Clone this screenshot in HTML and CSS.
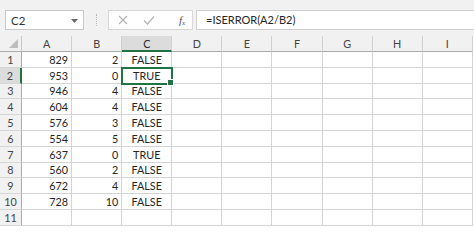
FILE: index.html
```html
<!DOCTYPE html>
<html>
<head>
<meta charset="utf-8">
<link rel="stylesheet" href="styles.css">
</head>
<body>
<div class="toolbar">
  <div class="namebox">
    <span class="name">C2</span>
    <svg class="drop" width="7" height="4" viewBox="0 0 7 4"><path d="M0 0 H7 L3.5 4 Z" fill="#6b6b6b"/></svg>
  </div>
  <div class="grip"></div>
  <div class="fxbtns">
    <svg class="ic" width="10" height="10" viewBox="0 0 10 10"><path d="M1 1 L9 9 M9 1 L1 9" stroke="#b4b4b4" stroke-width="1.2" fill="none"/></svg>
    <svg class="ic" width="12" height="10" viewBox="0 0 12 10"><path d="M1 5.5 L4.5 9 L11 1.5" stroke="#b4b4b4" stroke-width="1.2" fill="none"/></svg>
    <span class="fx">f<sub>x</sub></span>
  </div>
  <div class="formula">=ISERROR(A2/B2)</div>
</div>
<div class="sheet">
  <div class="corner"></div>
  <div class="ch">A</div><div class="ch">B</div><div class="ch selh">C</div><div class="ch">D</div><div class="ch">E</div><div class="ch">F</div><div class="ch">G</div><div class="ch">H</div><div class="ch">I</div>

  <div class="rh">1</div><div class="c n">829</div><div class="c n">2</div><div class="c b">FALSE</div><div class="c"></div><div class="c"></div><div class="c"></div><div class="c"></div><div class="c"></div><div class="c"></div>
  <div class="rh selr">2</div><div class="c n">953</div><div class="c n">0</div><div class="c b sel">TRUE</div><div class="c"></div><div class="c"></div><div class="c"></div><div class="c"></div><div class="c"></div><div class="c"></div>
  <div class="rh">3</div><div class="c n">946</div><div class="c n">4</div><div class="c b">FALSE</div><div class="c"></div><div class="c"></div><div class="c"></div><div class="c"></div><div class="c"></div><div class="c"></div>
  <div class="rh">4</div><div class="c n">604</div><div class="c n">4</div><div class="c b">FALSE</div><div class="c"></div><div class="c"></div><div class="c"></div><div class="c"></div><div class="c"></div><div class="c"></div>
  <div class="rh">5</div><div class="c n">576</div><div class="c n">3</div><div class="c b">FALSE</div><div class="c"></div><div class="c"></div><div class="c"></div><div class="c"></div><div class="c"></div><div class="c"></div>
  <div class="rh">6</div><div class="c n">554</div><div class="c n">5</div><div class="c b">FALSE</div><div class="c"></div><div class="c"></div><div class="c"></div><div class="c"></div><div class="c"></div><div class="c"></div>
  <div class="rh">7</div><div class="c n">637</div><div class="c n">0</div><div class="c b">TRUE</div><div class="c"></div><div class="c"></div><div class="c"></div><div class="c"></div><div class="c"></div><div class="c"></div>
  <div class="rh">8</div><div class="c n">560</div><div class="c n">2</div><div class="c b">FALSE</div><div class="c"></div><div class="c"></div><div class="c"></div><div class="c"></div><div class="c"></div><div class="c"></div>
  <div class="rh">9</div><div class="c n">672</div><div class="c n">4</div><div class="c b">FALSE</div><div class="c"></div><div class="c"></div><div class="c"></div><div class="c"></div><div class="c"></div><div class="c"></div>
  <div class="rh">10</div><div class="c n">728</div><div class="c n">10</div><div class="c b">FALSE</div><div class="c"></div><div class="c"></div><div class="c"></div><div class="c"></div><div class="c"></div><div class="c"></div>
  <div class="rh">11</div><div class="c"></div><div class="c"></div><div class="c"></div><div class="c"></div><div class="c"></div><div class="c"></div><div class="c"></div><div class="c"></div><div class="c"></div>
</div>
</body>
</html>
```

FILE: styles.css
```css
* { box-sizing: border-box; }
html, body {
  margin: 0;
  padding: 0;
  background: #ffffff;
  overflow: hidden;
  font-family: "Lato", "Noto Sans", sans-serif;
  color: #262626;
}
.toolbar {
  height: 36px;
  background: #f1f1f1;
  display: flex;
  align-items: flex-start;
  padding: 10px 0 0 5px;
}
.namebox {
  width: 79px;
  height: 20px;
  background: #fff;
  border: 1px solid #c8c8c8;
  display: flex;
  align-items: center;
  justify-content: space-between;
  padding: 0 5px 0 5px;
  font-size: 11.5px;
  color: #333;
}
.drop { margin-top: 1px; }
.grip {
  width: 1px;
  height: 12px;
  margin: 4px 11px 0 12px;
  border-left: 1px dotted #b8b8b8;
}
.fxbtns {
  width: 85px;
  height: 20px;
  background: #fff;
  border: 1px solid #d6d6d6;
  display: flex;
  align-items: center;
  padding-left: 9px;
  gap: 17px;
}
.fxbtns .ic:nth-child(2) { margin-left: -2px; }
.fx {
  font-family: "Liberation Serif", serif;
  font-style: italic;
  font-size: 11px;
  color: #555;
  margin-left: 7px;
}
.fx sub { font-size: 7px; vertical-align: -1px; }
.formula {
  flex: 1;
  margin-left: 3px;
  height: 20px;
  background: #fff;
  border: 1px solid #d0d0d0;
  border-right: none;
  font-size: 11px;
  line-height: 18px;
  padding-left: 9px;
  color: #262626;
}
.sheet {
  display: grid;
  grid-template-columns: 22px repeat(9, 50.1px);
  grid-template-rows: 16px;
  grid-auto-rows: 15.8px;
  font-size: 10.8px;
}
.corner {
  background: #f1f1f1;
  border-right: 1px solid #c6c6c6;
  border-bottom: 1px solid #ababab;
  position: relative;
}
.corner::after {
  content: "";
  position: absolute;
  right: 3px;
  bottom: 3px;
  width: 0;
  height: 0;
  border-left: 9px solid transparent;
  border-bottom: 9px solid #bdbdbd;
}
.ch {
  background: #f1f1f1;
  border-right: 1px solid #d0d0d0;
  border-bottom: 1px solid #ababab;
  display: flex;
  align-items: center;
  justify-content: center;
  color: #444;
  font-size: 10.8px;
}
.ch.selh {
  background: #dcdcdc;
  border-bottom: 2px solid #217346;
  color: #2b2b2b;
}
.rh {
  background: #f1f1f1;
  border-right: 1px solid #ababab;
  border-bottom: 1px solid #d6d6d6;
  display: flex;
  align-items: center;
  justify-content: center;
  color: #444;
  font-size: 10.8px;
}
.rh.selr {
  background: #dcdcdc;
  border-right: 2px solid #217346;
}
.c {
  border-right: 1px solid #d4d4d4;
  border-bottom: 1px solid #d4d4d4;
  display: flex;
  align-items: center;
  padding: 0 3px;
  color: #262626;
}
.c.n { justify-content: flex-end; }
.c.b { justify-content: center; }
.c.sel {
  position: relative;
  outline: 2px solid #217346;
  outline-offset: -1px;
}
.c.sel::after {
  content: "";
  position: absolute;
  right: -3px;
  bottom: -3px;
  width: 5px;
  height: 5px;
  background: #217346;
  border: 1px solid #fff;
}
```
